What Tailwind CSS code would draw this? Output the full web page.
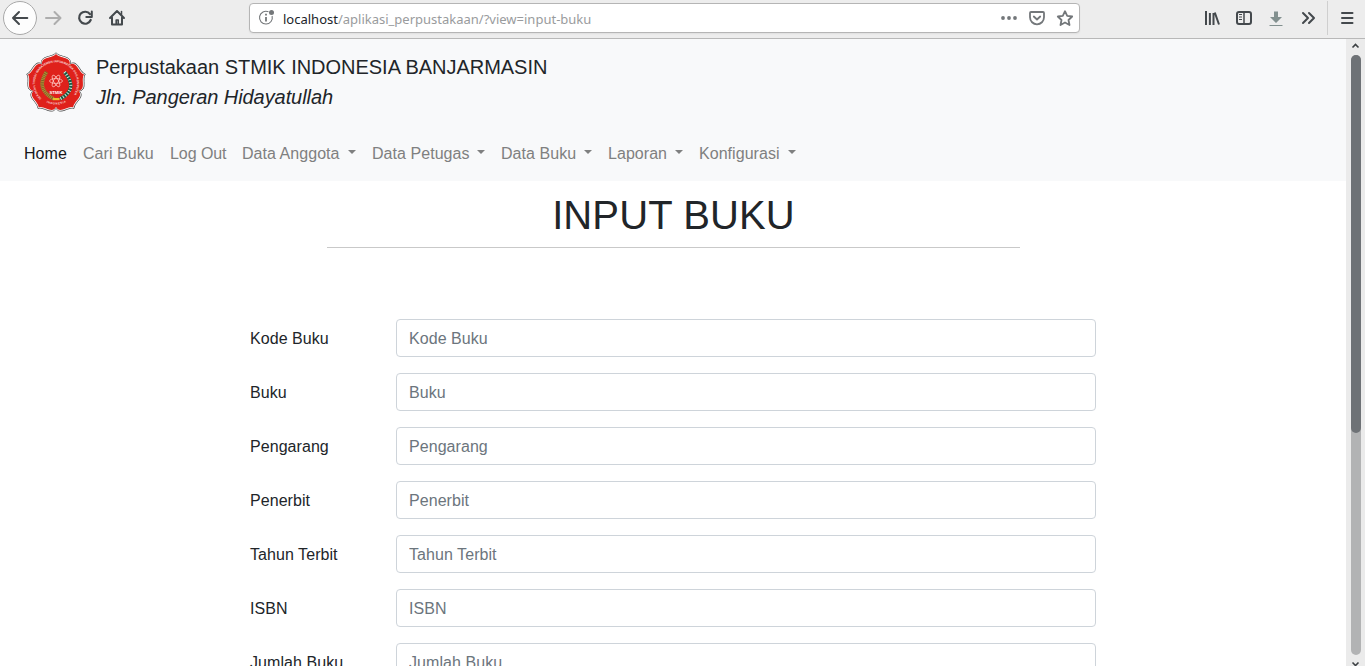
<!DOCTYPE html>
<html lang="id">
<head>
<meta charset="utf-8">
<title>Perpustakaan</title>
<script src="https://cdn.jsdelivr.net/npm/@tailwindcss/browser@4"></script>
</head>
<body class="h-[666px] w-[1365px] overflow-hidden bg-white font-['Liberation_Sans',Arial,sans-serif] text-base text-[#212529]">
<div class="flex h-[666px] flex-col">
  <!-- Browser toolbar -->
  <header class="flex h-[39px] shrink-0 border-b border-[#b8b8b8] bg-[#ededed] font-['Noto_Sans',sans-serif]">
    <div class="w-[249px] shrink-0">
      <svg class="block" width="140" height="38" fill="none" stroke="#44494d" stroke-width="2" stroke-linecap="round" stroke-linejoin="round">
        <circle cx="20" cy="18" r="16.5" fill="#fdfdfd" stroke="#a9a9a9" stroke-width="1"/>
        <path d="M27.300 18H13M19 12l-6 6 6 6"/>
        <path d="M46 18h14M54.500 12l6 6-6 6" stroke="#adadad"/>
        <path d="M90 14.200A6 6 0 1 0 90.700 20" stroke-width="2.200"/><path d="M91.800 11.500v5.500h-5.500"/>
        <path d="M110 18l7-7 7 7M112 17.500V24.500h10V17.500" /><path d="M116.200 24v-4h2v4" stroke-width="1.600"/><path d="M121.500 11.500v3" stroke-width="1.500"/>
      </svg>
    </div>
    <div class="mt-[3px] flex h-[30px] w-[831px] shrink-0 items-center rounded-[4px] border border-[#b5b5b5] bg-white shadow-[0_1px_2px_rgba(0,0,0,0.06)]">
      <svg class="ml-[8px] shrink-0" width="20" height="20" fill="none" stroke="#737679" stroke-width="1.100">
        <path d="M10.500 3.800A6.400 6.400 0 1 0 14.100 8"/><circle cx="13.500" cy="4.500" r="2.500" fill="#737679" stroke="none"/>
        <path d="M8 9v4.500" stroke-width="1.800"/><path d="M8 5.800v1.700" stroke-width="1.800"/>
      </svg>
      <p class="ml-[5px] whitespace-nowrap pt-px text-[13px] leading-[20px] text-[#999b9d]"><span class="text-[#20242a]">localhost</span>/aplikasi_perpustakaan/?view=input-buku</p>
      <svg class="ml-auto mr-[2px] shrink-0" width="80" height="28" fill="none" stroke="#73777a" stroke-width="1.800" stroke-linejoin="round" stroke-linecap="round">
        <g fill="#73777a" stroke="none"><circle cx="6" cy="14" r="1.900"/><circle cx="12" cy="14" r="1.900"/><circle cx="18" cy="14" r="1.900"/></g>
        <path d="M34 8h12q1 0 1 1v4.300a7 7 0 0 1-14 0V9q0-1 1-1z"/><path d="M36.800 12.500l3.200 3 3.200-3"/>
        <path d="M68 7.200l2.200 4.700 5 .6-3.700 3.500 1 5-4.500-2.500-4.500 2.500 1-5-3.700-3.500 5-.6z"/>
      </svg>
    </div>
    <div class="ml-auto">
      <svg class="block" width="175" height="38" fill="none" stroke="#44494d" stroke-width="2" stroke-linejoin="round">
        <path d="M16 11v14M19.900 13v12M23.500 13v12M24.800 12.500L29 24.500"/>
        <rect x="47" y="12" width="14" height="12" rx="2"/><path d="M54 12v12" stroke-width="1.500"/><path d="M49 14.500h3M49 17h3M49 19.500h3" stroke-width="1"/>
        <path d="M84 11.500h4V17h4L86 23 80 17h4z" fill="#82908f" stroke="none"/><path d="M79.500 25.500h13" stroke="#82908f" stroke-width="1"/>
        <path d="M113 13l5 5-5 5M119 13l5 5-5 5" stroke-linecap="round"/>
        <path d="M137.500 1v34" stroke="#cfcfcf" stroke-width="1"/>
        <path d="M152 13h10.500M152 18h10.500M152 23h10.500" stroke-linecap="round"/>
      </svg>
    </div>
  </header>

  <div class="flex min-h-0 flex-1">
    <!-- Page -->
    <div class="min-w-0 flex-1 overflow-hidden">
      <div class="h-[142px] bg-[#f8f9fa]">
        <div class="flex pl-[26px] pt-[13px]">
          <svg class="h-[60px] w-[60px] overflow-visible" viewBox="0 0 60 60">
            <defs>
              <path id="petal" d="M30 31.500L15.800 12.500C13.500 3 26 6 30 .8C34 6 46.500 3 44.200 12.500Z"/>
              <g id="flower"><circle cx="30" cy="31.500" r="22.500"/><use href="#petal"/><use href="#petal" transform="rotate(72 30 31.500)"/><use href="#petal" transform="rotate(144 30 31.500)"/><use href="#petal" transform="rotate(216 30 31.500)"/><use href="#petal" transform="rotate(288 30 31.500)"/></g>
              <path id="arcTop" d="M15.500 46.500A21 21 0 1 1 44.500 46.500"/>
              <path id="arcBottom" d="M16 47.500A22 22 0 0 0 44 47.500"/>
            </defs>
            <use href="#flower" fill="#444" stroke="#555" stroke-width=".9"/>
            <use href="#flower" fill="#fff" transform="translate(.3 .315) scale(.99)"/>
            <use href="#flower" fill="#df211b" transform="translate(1.200 1.260) scale(.96)"/>
            <g fill="#fff" font-family="Liberation Sans" font-weight="bold" font-size="3" opacity=".8">
              <text><textPath href="#arcTop" textLength="94">SEKOLAH TINGGI MANAJEMEN INFORMATIKA DAN KOMPUTER</textPath></text>
              <text font-size="2.800"><textPath href="#arcBottom" startOffset="18%" textLength="20">INDONESIA</textPath></text>
            </g>
            <path d="M20.500 20Q9 37 28 47" fill="none" stroke="#b08a35" stroke-width="3.600"/>
            <path d="M20.500 20Q9 37 28 47" fill="none" stroke="#705822" stroke-width="3.600" stroke-dasharray=".6 1.200"/>
            <path d="M38.500 20Q53 37 34 47" fill="none" stroke="#176047" stroke-width="3.400"/>
            <path d="M38.500 20Q53 37 34 47" fill="none" stroke="#e6efe9" stroke-width="3" stroke-dasharray=".9 2"/>
            <rect x="27" y="46" width="6.500" height="2.200" fill="#e6c12c"/>
            <g fill="none" stroke="#ffd5d0" stroke-width=".7"><ellipse cx="30" cy="29" rx="6.500" ry="2.400"/><ellipse cx="30" cy="29" rx="6.500" ry="2.400" transform="rotate(60 30 29)"/><ellipse cx="30" cy="29" rx="6.500" ry="2.400" transform="rotate(120 30 29)"/></g>
            <text x="23.500" y="41.800" fill="#fff" font-family="Liberation Sans" font-weight="bold" font-size="4.200" textLength="13">STMIK</text>
          </svg>
          <div class="ml-[10px] text-[20px] leading-[30px]">
            <p class="tracking-[-0.025px]">Perpustakaan STMIK INDONESIA BANJARMASIN</p>
            <p class="italic tracking-[-0.08px]">Jln. Pangeran Hidayatullah</p>
          </div>
        </div>
        <nav class="mt-[30px] flex gap-4 pl-6 leading-6 tracking-[0.05px] text-[#7f8080] [&_a]:flex [&_a]:shrink-0 [&_a]:justify-between [&_a]:whitespace-nowrap [&_i]:mt-[8px] [&_i]:h-0 [&_i]:border-x-[4.8px] [&_i]:border-t-[4.8px] [&_i]:border-x-transparent">
          <a class="w-[43px] text-[#17181a]">Home</a><a class="w-[71px]">Cari Buku</a><a class="w-[56px] tracking-[-0.06px]">Log Out</a><a class="w-[114px]">Data Anggota<i></i></a><a class="w-[113px]">Data Petugas<i></i></a><a class="w-[91px]">Data Buku<i></i></a><a class="w-[75px]">Laporan<i></i></a><a class="w-[97px]">Konfigurasi<i></i></a>
        </nav>
      </div>
      <main>
        <h1 class="pl-px pt-[10px] text-center text-[40px] leading-[48px] tracking-[0.12px]">INPUT BUKU</h1>
        <hr class="ml-[327px] mt-[8px] w-[693px] border-[#c9c9c9]">
        <form class="ml-[250px] mt-[71px] flex w-[846px] flex-col gap-4 tracking-[0.06px] [&_input]:h-[38px] [&_input]:w-[700px] [&_input]:rounded-[4px] [&_input]:border [&_input]:border-[#ced4da] [&_input]:px-3 [&_input]:pt-[2px] [&_input]:tracking-[0.06px] [&_input]:placeholder-[#6c757d] [&_label]:flex [&_label]:items-center [&_label]:justify-between [&_span]:pt-[2px]">
          <label><span>Kode Buku</span><input placeholder="Kode Buku"></label>
          <label><span>Buku</span><input placeholder="Buku"></label>
          <label><span>Pengarang</span><input placeholder="Pengarang"></label>
          <label><span>Penerbit</span><input placeholder="Penerbit"></label>
          <label><span>Tahun Terbit</span><input placeholder="Tahun Terbit"></label>
          <label><span>ISBN</span><input placeholder="ISBN"></label>
          <label><span>Jumlah Buku</span><input placeholder="Jumlah Buku"></label>
        </form>
      </main>
    </div>
    <!-- Scrollbar -->
    <div class="flex w-[19px] shrink-0 flex-col items-center bg-[#ebebeb]">
      <svg class="h-[16px] w-[19px] shrink-0" fill="none" stroke="#3c4043" stroke-width="1.600"><path d="M6.500 8.500l3-3 3 3"/></svg>
      <div class="ml-px h-[600px] w-[10px] shrink-0 rounded-full bg-[#b2b3b4]"><div class="h-[378px] rounded-full bg-[#6e7276]"></div></div>
      <svg class="mt-[5px] h-[6px] w-[19px] shrink-0" fill="none" stroke="#3c4043" stroke-width="1.600"><path d="M6.500 2.500l3 3 3-3"/></svg>
    </div>
  </div>
</div>
</body>
</html>
